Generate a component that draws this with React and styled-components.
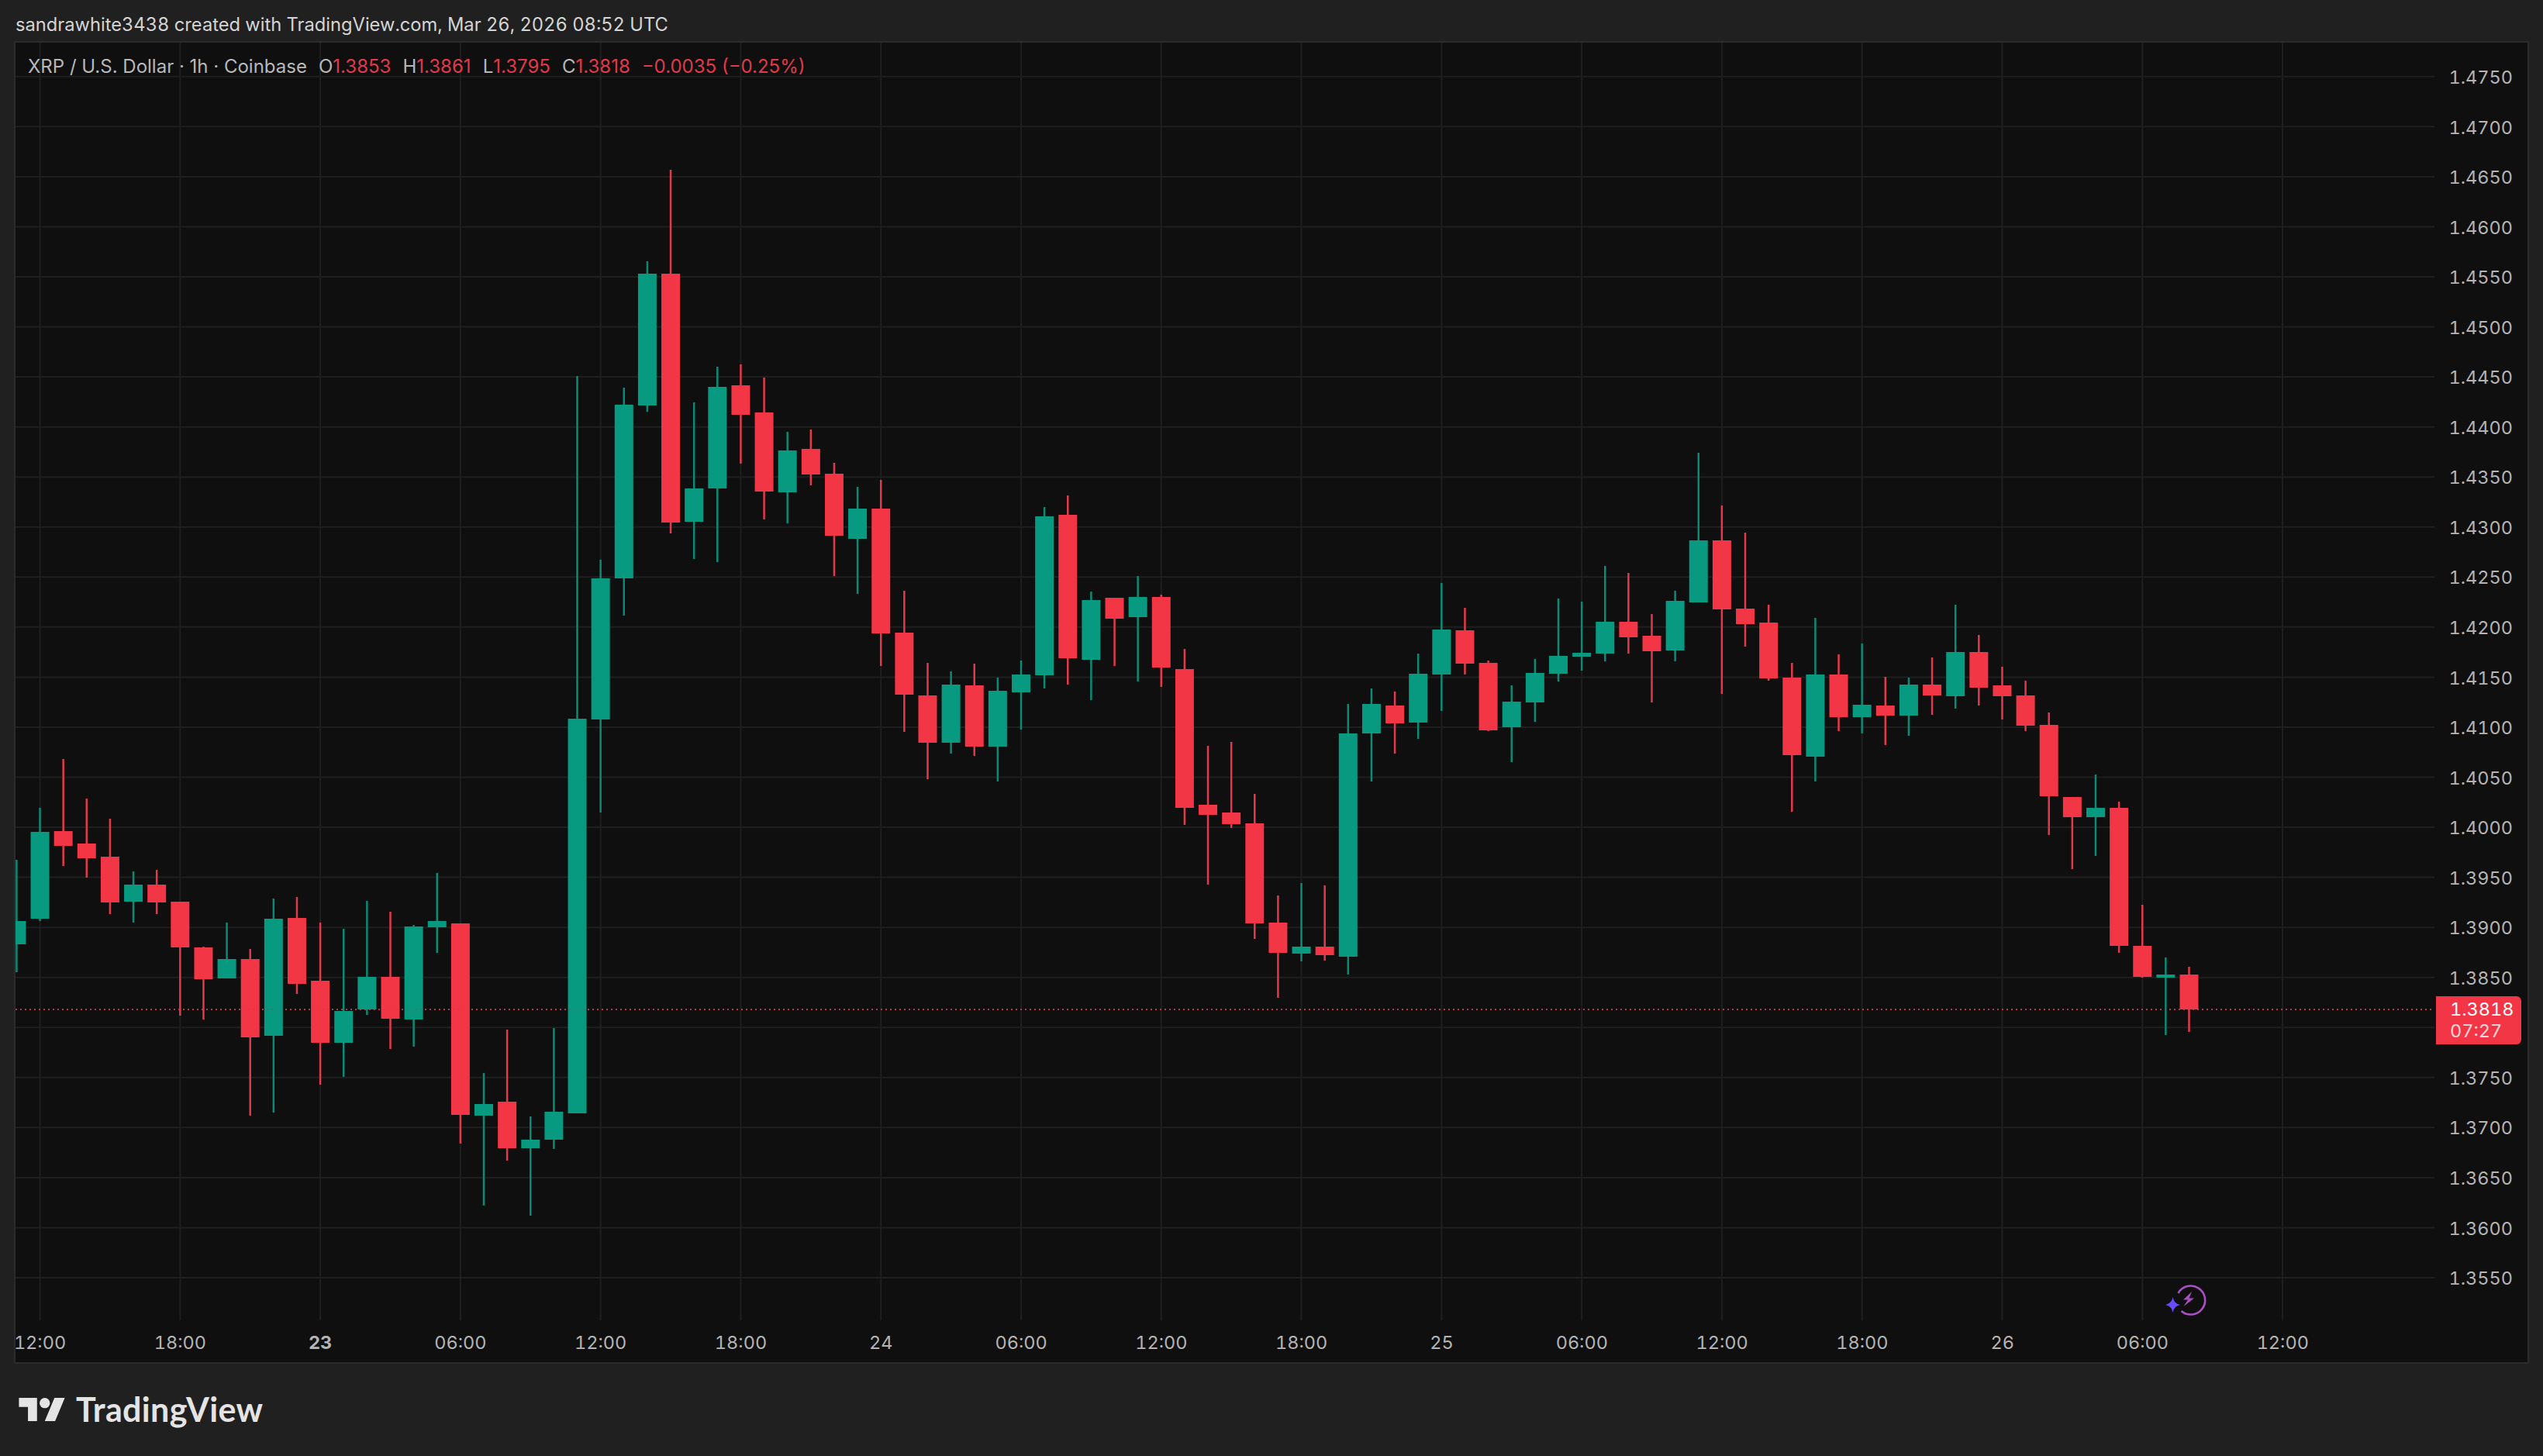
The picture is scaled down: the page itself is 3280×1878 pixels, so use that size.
import React from 'react'
import styled, { createGlobalStyle } from 'styled-components'

const RED = '#f23645'
const GREEN = '#089981'

const GlobalStyle = createGlobalStyle`
    html, body {
        margin: 0;
        padding: 0;
        background-color: #202020;
    }
    * {
        box-sizing: border-box;
    }
`

const Page = styled.div`
    width: 3280px;
    height: 1878px;
    background-color: #202020;
    font-family: Inter, Roboto, "Liberation Sans", sans-serif;
    font-variant-numeric: tabular-nums;
    overflow: hidden;
`

const Header = styled.div`
    height: 53px;
    padding: 18px 0 0 20px;
    color: #d4d4d4;
    font-size: 23.7px;
    line-height: 28px;
`

const Panel = styled.div`
    width: 3244px;
    height: 1706px;
    margin-left: 18px;
    border: 2px solid #2b2b2b;
    background-color: #0f0f0f;
    display: grid;
    grid-template-columns: 3120px 120px;
    grid-template-rows: 1648px 54px;
`

const Pane = styled.div`
    position: relative;
    overflow: hidden;
`

const ChartSvg = styled.svg`
    display: block;
    width: 3120px;
    height: 1648px;
`

const Legend = styled.div`
    position: absolute;
    top: 17px;
    left: 16px;
    display: flex;
    align-items: center;
    gap: 15px;
    color: #b8b8b8;
    font-size: 24px;
    font-variant-numeric: proportional-nums;
    line-height: 28px;
    white-space: nowrap;
`

const Ohlc = styled.span`
    display: flex;
`

const Val = styled.span`
    color: #e03a4a;
`

const BoltBadge = styled.svg`
    position: absolute;
    left: 2765px;
    top: 1595px;
    width: 70px;
    height: 54px;
`

const PriceAxis = styled.div`
    position: relative;
    padding-top: 13px;
    display: flex;
    flex-direction: column;
`

const PriceLabel = styled.div`
    height: 64.55px;
    line-height: 64.55px;
    padding-right: 19px;
    text-align: right;
    color: #b4b4b4;
    font-size: 23.5px;
`

const PriceTag = styled.div`
    position: absolute;
    top: 1230px;
    left: 2px;
    width: 110px;
    height: 62px;
    padding: 3px 0 0 18px;
    background-color: ${RED};
    border-radius: 0 6px 6px 0;
    color: #fff;
    font-size: 23.5px;
    line-height: 28px;
`

const Countdown = styled.div`
    color: rgba(255, 255, 255, 0.8);
`

const TimeAxis = styled.div`
    display: flex;
    gap: 117.8px;
    padding-top: 15px;
`

const TimeTick = styled.div`
    flex: 0 0 63px;
    min-width: 0;
    display: flex;
    justify-content: center;
    white-space: nowrap;
    color: #b4b4b4;
    font-size: 23.5px;
    line-height: 28px;
    font-weight: ${(props) => (props.$strong ? 700 : 400)};
`

const AxisCorner = styled.div``

const Footer = styled.div`
    display: flex;
    align-items: center;
    gap: 14px;
    padding: 39px 0 0 24px;
`

const LogoMark = styled.svg`
    width: 60px;
    height: 30px;
    fill: #e4e4e4;
`

const Wordmark = styled.div`
    color: #e4e4e4;
    font-family: Lato, sans-serif;
    font-size: 43px;
    font-weight: 700;
    line-height: 40px;
    letter-spacing: 0.35px;
`

// wickTop, bodyTop, bodyBottom, wickBottom, colour - in page pixels
const CANDLES = [
    [1109, 1188, 1218, 1254, 'g'], [1042, 1073, 1185, 1188, 'g'], [979, 1072, 1091, 1117, 'r'],
    [1030, 1088, 1107, 1132, 'r'], [1056, 1105, 1164, 1179, 'r'], [1124, 1141, 1163, 1190, 'g'],
    [1122, 1141, 1164, 1179, 'r'], [1163, 1163, 1222, 1310, 'r'], [1221, 1222, 1263, 1315, 'r'],
    [1190, 1237, 1262, 1262, 'g'], [1224, 1237, 1338, 1439, 'r'], [1159, 1185, 1336, 1435, 'g'],
    [1157, 1184, 1269, 1282, 'r'], [1190, 1265, 1345, 1399, 'r'], [1198, 1304, 1345, 1389, 'g'],
    [1162, 1260, 1302, 1309, 'g'], [1176, 1260, 1314, 1353, 'r'], [1193, 1195, 1315, 1350, 'g'],
    [1126, 1188, 1196, 1229, 'g'], [1191, 1191, 1438, 1475, 'r'], [1384, 1424, 1439, 1555, 'g'],
    [1328, 1421, 1481, 1497, 'r'], [1440, 1470, 1481, 1568, 'g'], [1326, 1434, 1470, 1482, 'g'],
    [485, 927, 1436, 1436, 'g'], [722, 746, 928, 1048, 'g'], [500, 522, 746, 794, 'g'],
    [337, 353, 523, 531, 'g'], [219, 353, 674, 688, 'r'], [519, 630, 673, 721, 'g'],
    [473, 499, 630, 725, 'g'], [470, 497, 535, 598, 'r'], [487, 532, 634, 670, 'r'],
    [557, 581, 635, 675, 'g'], [554, 579, 612, 626, 'r'], [597, 611, 691, 743, 'r'],
    [628, 656, 695, 766, 'g'], [619, 656, 817, 859, 'r'], [762, 816, 896, 944, 'r'],
    [855, 897, 958, 1005, 'r'], [866, 883, 958, 972, 'g'], [856, 884, 963, 975, 'r'],
    [874, 891, 963, 1008, 'g'], [852, 870, 893, 941, 'g'], [654, 666, 871, 888, 'g'],
    [639, 664, 849, 883, 'r'], [763, 774, 851, 903, 'g'], [771, 771, 798, 859, 'r'],
    [743, 770, 796, 879, 'g'], [767, 770, 861, 886, 'r'], [837, 863, 1042, 1064, 'r'],
    [962, 1038, 1051, 1141, 'r'], [957, 1048, 1063, 1068, 'r'], [1024, 1062, 1191, 1211, 'r'],
    [1155, 1190, 1229, 1287, 'r'], [1139, 1221, 1230, 1240, 'g'], [1142, 1221, 1232, 1239, 'r'],
    [908, 946, 1234, 1257, 'g'], [888, 908, 946, 1008, 'g'], [892, 910, 933, 972, 'r'],
    [843, 869, 932, 953, 'g'], [752, 812, 870, 917, 'g'], [784, 813, 856, 870, 'r'],
    [852, 855, 942, 943, 'r'], [884, 905, 938, 983, 'g'], [850, 868, 906, 931, 'g'],
    [772, 846, 869, 879, 'g'], [776, 842, 847, 865, 'g'], [730, 802, 843, 853, 'g'],
    [739, 802, 822, 843, 'r'], [792, 820, 840, 906, 'r'], [762, 775, 839, 853, 'g'],
    [584, 697, 777, 777, 'g'], [652, 697, 786, 895, 'r'], [687, 785, 805, 834, 'r'],
    [780, 803, 875, 878, 'r'], [855, 874, 974, 1047, 'r'], [797, 870, 976, 1008, 'g'],
    [844, 870, 925, 943, 'r'], [830, 909, 925, 946, 'g'], [873, 910, 923, 961, 'r'],
    [874, 883, 923, 949, 'g'], [848, 883, 897, 922, 'r'], [780, 841, 898, 914, 'g'],
    [819, 841, 887, 910, 'r'], [860, 884, 898, 928, 'r'], [878, 897, 936, 943, 'r'],
    [919, 935, 1027, 1077, 'r'], [1028, 1028, 1054, 1121, 'r'], [999, 1042, 1054, 1104, 'g'],
    [1034, 1042, 1220, 1229, 'r'], [1167, 1220, 1260, 1261, 'r'], [1235, 1257, 1261, 1335, 'g'],
    [1247, 1257, 1302, 1331, 'r'],
]

const PRICES = Array.from({ length: 25 }, (_, i) => (1.475 - i * 0.005).toFixed(4))
const PRICE_LINES = PRICES.map((_, i) => 98.8 + i * 64.55)
const TIME_LINES = Array.from({ length: 17 }, (_, i) => 21.4 + (1 + i * 6) * 30.13)
const TIMES = ['12:00', '18:00', '23', '06:00', '12:00', '18:00', '24', '06:00', '12:00', '18:00', '25', '06:00', '12:00', '18:00', '26', '06:00', '12:00']

const Candle = ({ index, data }) => {
    const [wickTop, bodyTop, bodyBottom, wickBottom, kind] = data
    const x = 21.4 + index * 30.13
    return (
        <g>
            <rect x={x - 1.25} y={wickTop} width="2.5" height={wickBottom - wickTop} fill={kind === 'g' ? '#0b8a75' : '#e23a4a'} />
            <rect x={x - 12} y={bodyTop} width="24" height={bodyBottom - bodyTop} fill={kind === 'g' ? GREEN : RED} />
        </g>
    )
}

const App = () => {
    return (
        <Page>
            <GlobalStyle />
            <Header>sandrawhite3438 created with TradingView.com, Mar 26, 2026 08:52 UTC</Header>
            <Panel>
                <Pane>
                    <ChartSvg viewBox="20 55 3120 1648">
                        {PRICE_LINES.map((y) => (
                            <line key={y} x1="20" x2="3140" y1={y} y2={y} stroke="#1f1f1f" strokeWidth="2" />
                        ))}
                        {TIME_LINES.map((x) => (
                            <line key={x} x1={x} x2={x} y1="55" y2="1703" stroke="#1f1f1f" strokeWidth="2" />
                        ))}
                        <line x1="20" x2="3140" y1="1302" y2="1302" stroke="#b03a4c" strokeWidth="2" strokeDasharray="2 4" />
                        {CANDLES.map((c, i) => (
                            <Candle key={i} index={i} data={c} />
                        ))}
                        <line x1="20" x2="3140" y1="1302" y2="1302" stroke="#b03a4c" strokeWidth="2" strokeDasharray="2 4" opacity="0.25" />
                    </ChartSvg>
                    <Legend>
                        <span>XRP / U.S. Dollar · 1h · Coinbase</span>
                        <Ohlc>O<Val>1.3853</Val></Ohlc>
                        <Ohlc>H<Val>1.3861</Val></Ohlc>
                        <Ohlc>L<Val>1.3795</Val></Ohlc>
                        <Ohlc>C<Val>1.3818</Val></Ohlc>
                        <Val>−0.0035 (−0.25%)</Val>
                    </Legend>
                    <BoltBadge viewBox="0 0 70 54">
                        <path d="M24.5 18A18.5 18.5 0 1 1 28.5 41" fill="none" stroke="#ab4fc4" strokeWidth="2.6" />
                        <path d="M42 16L31 26.5H37L31.5 35L45 24.5H38.5Z" fill="#ab4fc4" />
                        <path d="M17.5 23Q19 31.5 27 33Q19 34.5 17.5 43Q16 34.5 8 33Q16 31.5 17.5 23Z" fill="#6a4cff" />
                    </BoltBadge>
                </Pane>
                <PriceAxis>
                    {PRICES.map((p) => (
                        <PriceLabel key={p}>{p === '1.3800' ? '' : p}</PriceLabel>
                    ))}
                    <PriceTag>
                        1.3818
                        <Countdown>07:27</Countdown>
                    </PriceTag>
                </PriceAxis>
                <TimeAxis>
                    {TIMES.map((t, i) => (
                        <TimeTick key={i} $strong={t === '23'}>{t}</TimeTick>
                    ))}
                </TimeAxis>
                <AxisCorner />
            </Panel>
            <Footer>
                <LogoMark viewBox="0 4 35.5 18">
                    <path d="M14 22H7V11H0V4h14v18zM28 22h-8l7.5-18h8L28 22z" />
                    <circle cx="20" cy="8" r="4" />
                </LogoMark>
                <Wordmark>TradingView</Wordmark>
            </Footer>
        </Page>
    )
}

export default App
